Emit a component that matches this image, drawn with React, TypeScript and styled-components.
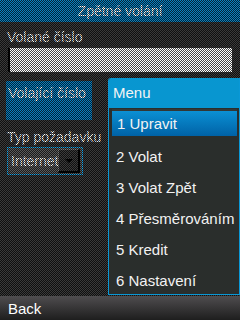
import styled, { createGlobalStyle } from 'styled-components';

const menuItems = ['1 Upravit', '2 Volat', '3 Volat Zpět', '4 Přesměrováním', '5 Kredit', '6 Nastavení'];

export default function App() {
  return (
    <>
      <GlobalStyle />
      <Screen>
        <Main>
          <TitleBar>Zpětné volání</TitleBar>
          <Form>
            <Label>Volané číslo</Label>
            <TextInput />
            <FocusField>Volající číslo</FocusField>
            <Label $gap={9}>Typ požadavku</Label>
            <Combo>
              <ComboText>Internet</ComboText>
              <ComboArrow>
                <Triangle />
              </ComboArrow>
            </Combo>
          </Form>
          <Dim />
          <Menu>
            <MenuHeader>Menu</MenuHeader>
            {menuItems.map((item, i) => (
              <MenuItem key={item} $active={i === 0}>
                {item}
              </MenuItem>
            ))}
          </Menu>
        </Main>
        <SoftBar>
          <SoftKey>Back</SoftKey>
        </SoftBar>
      </Screen>
    </>
  );
}

const GlobalStyle = createGlobalStyle`
  body {
    margin: 0;
    background: #000;
    font-family: "Liberation Sans", Arial, sans-serif;
  }
`;

const Screen = styled.div`
  width: 240px;
  height: 320px;
  display: flex;
  flex-direction: column;
  overflow: hidden;
`;

const Main = styled.div`
  position: relative;
  height: 296px;
  background: #3a3a3a;
`;

const TitleBar = styled.div`
  height: 22px;
  line-height: 22px;
  text-align: center;
  font-size: 14px;
  color: #fff;
  background: #0b80c0;
`;

const Form = styled.div`
  display: flex;
  flex-direction: column;
  align-items: flex-start;
  padding: 7px 0 0 7px;
`;

const Label = styled.div<{ $gap?: number }>`
  margin-top: ${(p) => p.$gap || 0}px;
  font-size: 14px;
  line-height: 16px;
  color: #fff;
`;

const TextInput = styled.div`
  box-sizing: border-box;
  width: 224px;
  height: 24px;
  margin: 3px 0 0 1px;
  background: #fff;
  border-left: 2px solid #000;
`;

const FocusField = styled.div`
  box-sizing: border-box;
  width: 86px;
  height: 39px;
  margin: 9px 0 0 -1px;
  padding: 4px 2px;
  font-size: 14px;
  line-height: 16px;
  color: #fff;
  background: #0a7ec0;
`;

const Combo = styled.div`
  box-sizing: border-box;
  width: 76px;
  height: 28px;
  margin-top: 2px;
  display: flex;
  align-items: center;
  justify-content: space-between;
  padding: 0 2px 0 3px;
  background: #5a5a5a;
  border: 1px solid #1aa0e0;
`;

const ComboText = styled.span`
  font-size: 14px;
  color: #fff;
`;

const ComboArrow = styled.span`
  box-sizing: border-box;
  width: 22px;
  height: 24px;
  display: flex;
  align-items: center;
  justify-content: center;
  background: #3a3a3a;
  border-top: 1px solid #7a7a7a;
  border-left: 1px solid #7a7a7a;
  border-right: 2px solid #000;
  border-bottom: 2px solid #000;
`;

const Triangle = styled.span`
  width: 0;
  height: 0;
  border-left: 4px solid transparent;
  border-right: 4px solid transparent;
  border-top: 4px solid #000;
`;

const Dim = styled.div`
  position: absolute;
  inset: 0;
  background: repeating-conic-gradient(rgba(0, 0, 0, 0.72) 0% 25%, transparent 0% 50%) 0 0 / 2px 2px;
`;

const Menu = styled.div`
  position: absolute;
  left: 108px;
  right: 0;
  top: 78px;
  display: flex;
  flex-direction: column;
  background: #2a2e2c;
  border: 1px solid #0a98d6;
  border-top: none;
  border-top-left-radius: 3px;
  overflow: hidden;
`;

const MenuHeader = styled.div`
  height: 30px;
  line-height: 30px;
  padding-left: 4px;
  font-size: 15px;
  color: #f4f4f4;
  background: #0896d0;
`;

const MenuItem = styled.div<{ $active?: boolean }>`
  box-sizing: border-box;
  display: flex;
  align-items: center;
  font-size: 15px;
  color: #f2f2f2;
  white-space: nowrap;
  height: ${(p) => (p.$active ? 27 : 31)}px;
  margin: ${(p) => (p.$active ? '1px 2px 3px 3px' : '0')};
  padding: ${(p) => (p.$active ? '0 0 0 5px' : '3px 0 0 7px')};
  background: ${(p) => (p.$active ? 'linear-gradient(#0b90d4, #0062a6)' : 'transparent')};
  border-top: ${(p) => (p.$active ? '2px solid #333735' : 'none')};
`;

const SoftBar = styled.div`
  height: 24px;
  display: flex;
  align-items: center;
  padding-left: 8px;
  background: linear-gradient(#4f4d4f, #1e1e1e);
`;

const SoftKey = styled.span`
  font-size: 15px;
  color: #fff;
`;
